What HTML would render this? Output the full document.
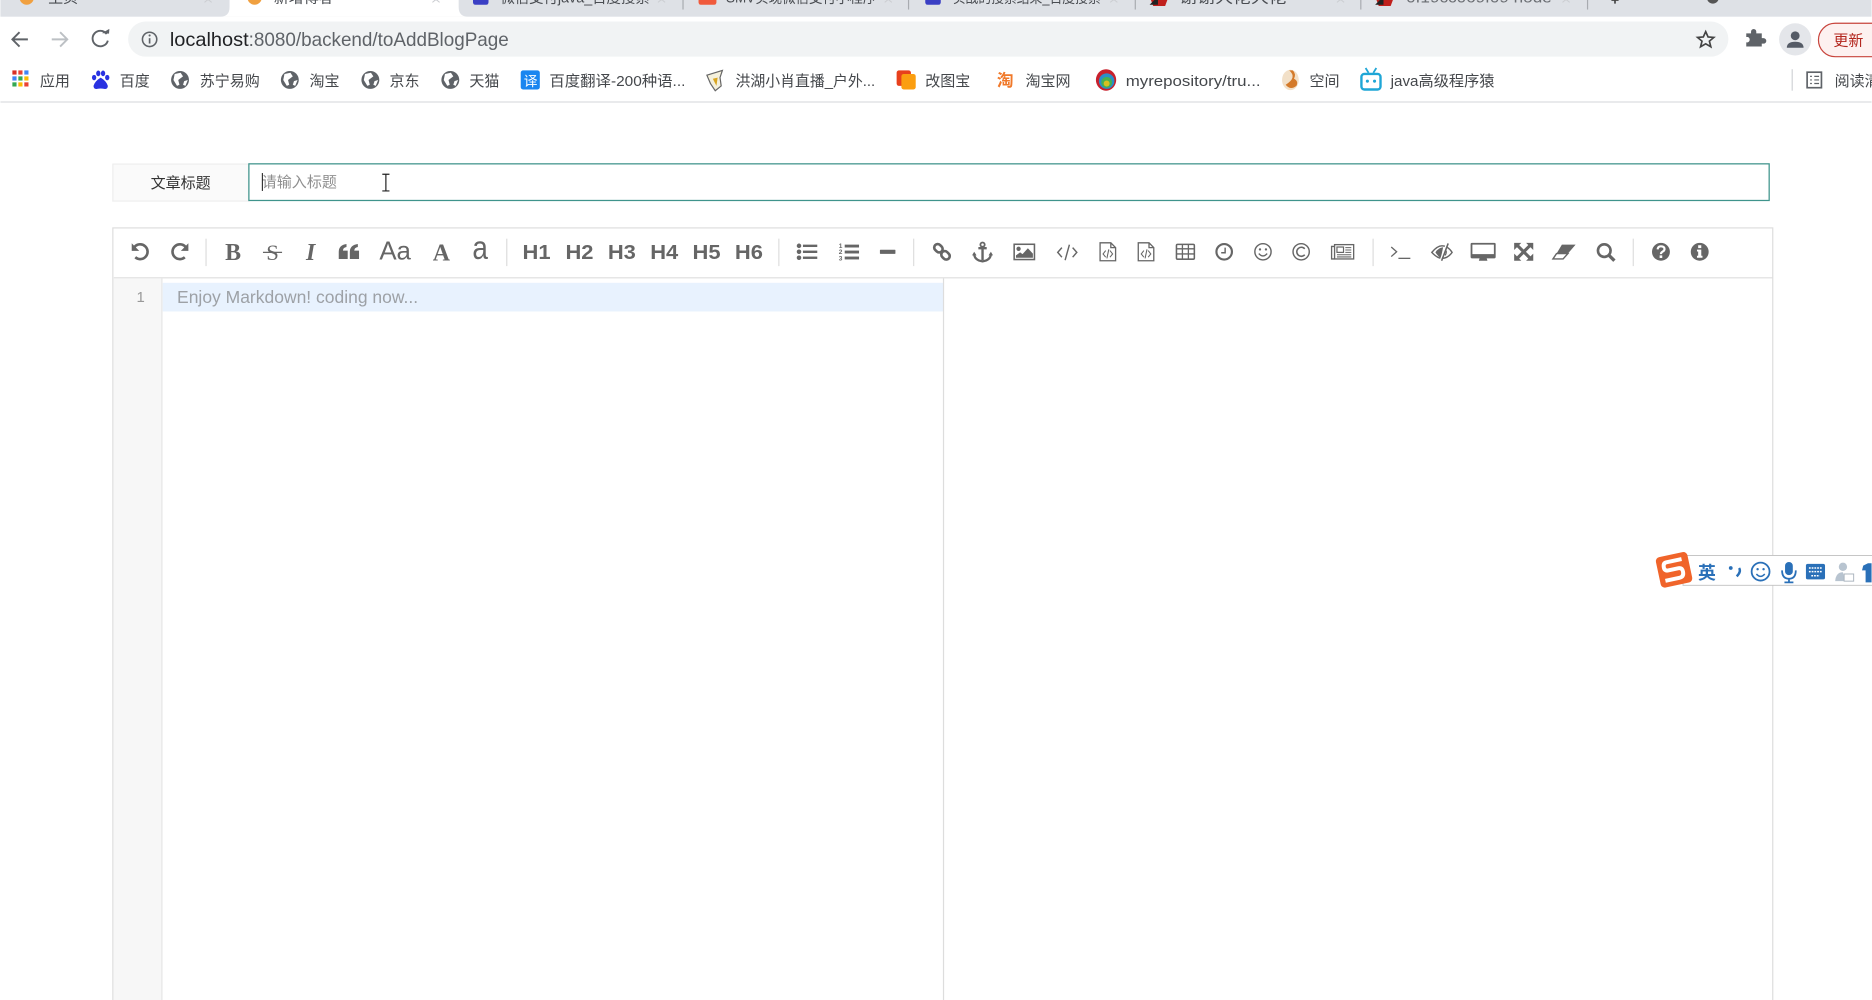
<!DOCTYPE html>
<html lang="zh-CN">
<head>
<meta charset="utf-8">
<title>localhost:8080/backend/toAddBlogPage</title>
<style>
html,body{margin:0;padding:0;width:1872px;height:1000px;overflow:hidden;background:#fff}
svg{display:block}
text{font-family:"Liberation Sans","Noto Sans CJK SC",sans-serif}
.bm{font-size:12.6px;fill:#44474b}
.tab{font-size:12.6px;fill:#4a4d52}
.h{font-family:"Liberation Sans",sans-serif;font-weight:700;font-size:17px;fill:#666}
.ic{fill:#666}
.st{fill:none;stroke:#666;stroke-width:1.3}
.st2{fill:none;stroke:#666;stroke-width:2.2}
.sep{stroke:#ddd;stroke-width:1}
.bl{fill:#2a70b8}
</style>
</head>
<body>
<svg width="1872" height="1000" viewBox="0 0 1568 838" xmlns="http://www.w3.org/2000/svg">
<rect width="1568" height="838" fill="#fff"/>

<!-- Tab strip -->
<rect width="1568" height="14" fill="#dee1e6"/>
<path d="M184 14 Q192 14 192 6 L192 0 L384 0 L384 6 Q384 14 392 14 Z" fill="#fff"/>
<circle cx="22" cy="-2" r="6" fill="#f0a040"/>
<circle cx="213" cy="-2" r="6" fill="#f0a040"/>
<text class="tab" x="40" y="2">主页</text>
<text class="tab" x="229" y="2">新增博客</text>
<rect x="396" y="-6" width="13" height="10" rx="2" fill="#3a3fc4"/>
<text class="tab" x="419" y="2" textLength="125" lengthAdjust="spacingAndGlyphs">微信支付java_百度搜索</text>
<rect x="585" y="-6" width="15" height="10" rx="2" fill="#f05a3c"/>
<text class="tab" x="608" y="2" textLength="126" lengthAdjust="spacingAndGlyphs">SMV实现微信支付小程序</text>
<rect x="775" y="-6" width="13" height="10" rx="2" fill="#3a3fc4"/>
<text class="tab" x="798" y="2" textLength="124" lengthAdjust="spacingAndGlyphs">实战的搜索结果_百度搜索</text>
<path d="M963 -3 L979 -3 L976 5 L966 5 Z" fill="#c0201c"/><path d="M963 4 L970 -3 L970 4 Z" fill="#222"/>
<text class="tab" x="988" y="2" textLength="90" lengthAdjust="spacingAndGlyphs">谢谢大佬大佬</text>
<path d="M1152 -3 L1168 -3 L1165 5 L1155 5 Z" fill="#c0201c"/><path d="M1152 4 L1159 -3 L1159 4 Z" fill="#222"/>
<text class="tab" x="1178" y="2" textLength="122" lengthAdjust="spacingAndGlyphs" style="fill:#6a6d72">0f19cc069f09 node</text>
<g stroke="#a8abb0" stroke-width="1">
<line x1="572" y1="0" x2="572" y2="8"/><line x1="761" y1="0" x2="761" y2="8"/><line x1="951" y1="0" x2="951" y2="8"/><line x1="1140" y1="0" x2="1140" y2="8"/><line x1="1330" y1="0" x2="1330" y2="8"/>
</g>
<g stroke="#ccced2" stroke-width="0.900" fill="none">
<path d="M171 -3 L177 2 M177 -3 L171 2"/><path d="M362 -3 L368 2 M368 -3 L362 2"/><path d="M551 -3 L557 2 M557 -3 L551 2"/><path d="M741 -3 L747 2 M747 -3 L741 2"/><path d="M930 -3 L936 2 M936 -3 L930 2"/><path d="M1120 -3 L1126 2 M1126 -3 L1120 2"/><path d="M1309 -3 L1315 2 M1315 -3 L1309 2"/>
</g>
<path d="M1353 -3 V3 M1350 0 H1356" stroke="#444" stroke-width="1.400"/>
<circle cx="1435" cy="-2" r="5" fill="#555"/>

<!-- Nav -->
<g fill="none" stroke="#5f6368" stroke-width="1.600">
<path d="M23 33 H10 M16 27 L10 33 L16 39"/>
</g>
<g fill="none" stroke="#bcc0c4" stroke-width="1.600">
<path d="M43 33 H56 M50 27 L56 33 L50 39"/>
</g>
<g fill="none" stroke="#5f6368" stroke-width="1.600">
<path d="M89 28.500 A6.500 6.500 0 1 0 90 34"/>
</g>
<path d="M85 28 L91 28 L91 24 Z" fill="#5f6368" transform="rotate(4 88 28)"/>

<!-- Address bar -->
<rect x="107" y="18" width="1341" height="29.500" rx="14.700" fill="#f1f3f4"/>
<circle cx="125" cy="33" r="6" fill="none" stroke="#5f6368" stroke-width="1.300"/>
<path d="M125 32 V36.500" stroke="#5f6368" stroke-width="1.400"/><circle cx="125" cy="29.700" r="0.900" fill="#5f6368"/>
<text x="142" y="38.500" font-size="16.300" fill="#202124" textLength="66" lengthAdjust="spacingAndGlyphs">localhost</text>
<text x="208" y="38.500" font-size="16.300" fill="#5f6368" textLength="218" lengthAdjust="spacingAndGlyphs">:8080/backend/toAddBlogPage</text>
<path d="M1429 26.500 L1431 31 L1435.800 31.400 L1432.100 34.500 L1433.300 39.200 L1429 36.700 L1424.700 39.200 L1425.900 34.500 L1422.200 31.400 L1427 31 Z" fill="none" stroke="#444" stroke-width="1.400"/>
<!-- puzzle -->
<path d="M1463 29 H1467 V27.500 A2.200 2.200 0 0 1 1471.400 27.500 V29 H1476 V33 H1477.500 A2.300 2.300 0 0 1 1477.500 37.600 H1476 V40 H1463 V36.500 H1464.300 A2.400 2.400 0 0 0 1464.300 32 H1463 Z" fill="#5f6368" transform="translate(0 -1)"/>
<!-- avatar -->
<circle cx="1504" cy="33" r="13.500" fill="#e4e6ea"/>
<circle cx="1504" cy="30" r="3.700" fill="#555b66"/>
<path d="M1497 40 Q1497 35 1504 35 Q1511 35 1511 40 Z" fill="#555b66"/>
<!-- update -->
<rect x="1523.500" y="19.500" width="80" height="28" rx="14" fill="#fdf1f0" stroke="#c8443c" stroke-width="1"/>
<text x="1536" y="38" font-size="12.600" fill="#b3261e">更新</text>

<!-- Bookmark bar -->
<g>
<rect x="10" y="59" width="3.500" height="3.500" fill="#d93025"/><rect x="15" y="59" width="3.500" height="3.500" fill="#ea4335"/><rect x="20" y="59" width="3.500" height="3.500" fill="#4285f4"/>
<rect x="10" y="64" width="3.500" height="3.500" fill="#4285f4"/><rect x="15" y="64" width="3.500" height="3.500" fill="#34a853"/><rect x="20" y="64" width="3.500" height="3.500" fill="#fbbc04"/>
<rect x="10" y="69" width="3.500" height="3.500" fill="#34a853"/><rect x="15" y="69" width="3.500" height="3.500" fill="#fbbc04"/><rect x="20" y="69" width="3.500" height="3.500" fill="#ea4335"/>
</g>
<text class="bm" x="33" y="72">应用</text>
<!-- baidu paw -->
<g fill="#2932e1">
<ellipse cx="78.500" cy="65" rx="1.800" ry="2.300"/><ellipse cx="82" cy="61.500" rx="1.800" ry="2.400"/><ellipse cx="86" cy="61.500" rx="1.800" ry="2.400"/><ellipse cx="89.500" cy="65" rx="1.800" ry="2.300"/>
<path d="M84 65 Q79 68 78 72 Q78 75 81 74.500 Q84 73.800 87 74.500 Q90 75 90 72 Q89 68 84 65Z"/>
</g>
<text class="bm" x="100" y="72">百度</text>
<!-- globes -->
<g><circle cx="150.500" cy="67" r="7.500" fill="#5f6368"/><path d="M146 62 L151 61 L153 64 L149 67 L150 71 L148 72 L145 67 Z M154 68 L157 67 L155 72 L153 71 Z" fill="#fff"/></g>
<text class="bm" x="167" y="72">苏宁易购</text>
<g><circle cx="242.500" cy="67" r="7.500" fill="#5f6368"/><path d="M238 62 L243 61 L245 64 L241 67 L242 71 L240 72 L237 67 Z M246 68 L249 67 L247 72 L245 71 Z" fill="#fff"/></g>
<text class="bm" x="259" y="72">淘宝</text>
<g><circle cx="310" cy="67" r="7.500" fill="#5f6368"/><path d="M305.500 62 L310.500 61 L312.500 64 L308.500 67 L309.500 71 L307.500 72 L304.500 67 Z M313.500 68 L316.500 67 L314.500 72 L312.500 71 Z" fill="#fff"/></g>
<text class="bm" x="326" y="72">京东</text>
<g><circle cx="377" cy="67" r="7.500" fill="#5f6368"/><path d="M372.500 62 L377.500 61 L379.500 64 L375.500 67 L376.500 71 L374.500 72 L371.500 67 Z M380.500 68 L383.500 67 L381.500 72 L379.500 71 Z" fill="#fff"/></g>
<text class="bm" x="393" y="72">天猫</text>
<!-- translate -->
<rect x="436" y="59" width="16" height="16" rx="2" fill="#1a86f0"/>
<text x="438.500" y="72" font-size="11.500" fill="#fff">译</text>
<text class="bm" x="460" y="72" textLength="114" lengthAdjust="spacingAndGlyphs">百度翻译-200种语...</text>
<!-- mascot -->
<path d="M592 63 L605 59 L603 65 L604 72 L599 76 L595 70 Z" fill="#f4f0dc" stroke="#666" stroke-width="1"/>
<path d="M597 66 L601 65 L600 72 Z" fill="#d9a520"/>
<text class="bm" x="616" y="72" textLength="117" lengthAdjust="spacingAndGlyphs">洪湖小肖直播_户外...</text>
<!-- gaitubao -->
<rect x="751" y="59" width="12" height="13" rx="2" fill="#e8401c"/>
<rect x="755" y="62" width="12" height="13" rx="2" fill="#fb9e10"/>
<text class="bm" x="775" y="72">改图宝</text>
<!-- taobao -->
<text x="835" y="72" font-size="14" font-weight="700" fill="#f0792a">淘</text>
<text class="bm" x="859" y="72">淘宝网</text>
<!-- colored logo -->
<ellipse cx="926.500" cy="67" rx="8.500" ry="9" fill="#c8202c"/>
<ellipse cx="927" cy="68" rx="6.500" ry="6.500" fill="#2a8fc8"/>
<ellipse cx="927" cy="69" rx="4.500" ry="4.500" fill="#48b050"/>
<ellipse cx="927" cy="70" rx="2.500" ry="2.500" fill="#d8c020"/>
<text class="bm" x="943" y="72" textLength="113" lengthAdjust="spacingAndGlyphs">myrepository/tru...</text>
<!-- kongjian -->
<ellipse cx="1081" cy="67" rx="7" ry="8.500" fill="#f2e0c8"/>
<path d="M1080 59 Q1087 65 1077 71 Q1081 76 1086 72 Q1088 68 1084 66 Q1086 62 1083 59Z" fill="#d47a2a"/>
<text class="bm" x="1097" y="72">空间</text>
<!-- bilibili -->
<rect x="1140.500" y="62" width="16" height="13" rx="2.500" fill="none" stroke="#1fa6d6" stroke-width="2"/>
<path d="M1144 57 L1146.500 61 M1153 57 L1150.500 61" stroke="#1fa6d6" stroke-width="1.500"/>
<circle cx="1145.500" cy="68" r="1.300" fill="#1fa6d6"/><circle cx="1151.500" cy="68" r="1.300" fill="#1fa6d6"/>
<text class="bm" x="1165" y="72" textLength="87" lengthAdjust="spacingAndGlyphs">java高级程序猿</text>
<line x1="1501.500" y1="58" x2="1501.500" y2="76" stroke="#d0d2d6"/>
<rect x="1514" y="60.500" width="12" height="13" fill="none" stroke="#5f6368" stroke-width="1.400"/>
<path d="M1516.500 64 H1518 M1516.500 67 H1518 M1516.500 70 H1518 M1520 64 H1524 M1520 67 H1524 M1520 70 H1524" stroke="#5f6368" stroke-width="1"/>
<text class="bm" x="1537" y="72">阅读清单</text>
<line x1="0" y1="85.500" x2="1568" y2="85.500" stroke="#dcdee1" stroke-width="1"/>

<!-- Title row -->
<rect x="94.200" y="137.500" width="114" height="31" fill="#fafafa" stroke="#eee"/>
<text x="151" y="157.500" font-size="12.600" fill="#333" text-anchor="middle">文章标题</text>
<rect x="208.200" y="137.300" width="1274" height="30.700" fill="#fff" stroke="#3f948c" stroke-width="1.050"/>
<text x="219" y="156.500" font-size="12.600" fill="#8f8f8f">请输入标题</text>
<line x1="219.500" y1="145" x2="219.500" y2="160" stroke="#222" stroke-width="0.900"/>
<path d="M320 146 H326 M323 146 V160 M320 160 H326" stroke="#222" stroke-width="1" fill="none"/>

<!-- Editor frame -->
<rect x="94.200" y="191" width="1391" height="660" fill="#fff" stroke="#ddd" stroke-width="1"/>
<line x1="95" y1="232.800" x2="1485" y2="232.800" stroke="#ddd"/>
<rect x="94.700" y="233.300" width="40.500" height="610" fill="#f7f7f7"/>
<line x1="135.300" y1="233.300" x2="135.300" y2="838" stroke="#e6e6e6"/>
<rect x="136" y="237" width="654" height="24" fill="#e8f2fe"/>
<line x1="790.300" y1="233.300" x2="790.300" y2="838" stroke="#ddd"/>
<text x="117.500" y="253" font-size="12.500" fill="#999" text-anchor="middle">1</text>
<text x="148" y="254" font-size="14.500" fill="#9da1a6" textLength="202" lengthAdjust="spacingAndGlyphs">Enjoy Markdown! coding now...</text>

<!-- Separators -->
<g class="sep">
<line x1="172.300" y1="200" x2="172.300" y2="223"/><line x1="424.300" y1="200" x2="424.300" y2="223"/><line x1="652.300" y1="200" x2="652.300" y2="223"/><line x1="765.300" y1="200" x2="765.300" y2="223"/><line x1="1150.300" y1="200" x2="1150.300" y2="223"/><line x1="1368.300" y1="200" x2="1368.300" y2="223"/>
</g>

<!-- undo / redo -->
<g transform="translate(117.500 211)"><path d="M-5 -4.200 A6.200 6.200 0 1 1 -4.500 4.600" class="st2"/><path d="M-7.500 -7.200 V-0.800 H-1.200 Z" class="ic"/></g>
<g transform="translate(150 211)"><path d="M5 -4.200 A6.200 6.200 0 1 0 4.500 4.600" class="st2"/><path d="M7.500 -7.200 V-0.800 H1.200 Z" class="ic"/></g>

<!-- B S I quote Aa A a -->
<text x="195" y="218" font-size="20" font-weight="700" fill="#666" text-anchor="middle" style="font-family:'Liberation Serif',serif">B</text>
<text x="228" y="218" font-size="19" fill="#666" text-anchor="middle" style="font-family:'Liberation Serif',serif">S</text>
<line x1="220" y1="211.500" x2="236" y2="211.500" stroke="#666" stroke-width="1.100"/>
<text x="260" y="218" font-size="20" font-style="italic" font-weight="700" fill="#666" text-anchor="middle" style="font-family:'Liberation Serif',serif">I</text>
<g transform="translate(292 211)" fill="#666">
<path d="M-8.500 6 V0 Q-8.500 -5.500 -2 -6.500 V-4 Q-5 -3.500 -5 -1 H-1 V6 Z"/>
<path d="M0.800 6 V0 Q0.800 -5.500 7.500 -6.500 V-4 Q4.500 -3.500 4.500 -1 H8.500 V6 Z"/>
</g>
<text x="317.500" y="217.500" font-size="22" fill="#666" textLength="26.500" lengthAdjust="spacingAndGlyphs">Aa</text>
<text x="369.500" y="218.500" font-size="20" font-weight="700" fill="#666" text-anchor="middle" style="font-family:'Liberation Serif',serif">A</text>
<text x="395.500" y="217" font-size="28" fill="#666" textLength="13" lengthAdjust="spacingAndGlyphs">a</text>

<!-- H1..H6 -->
<text class="h" x="437.500" y="217" textLength="23.500" lengthAdjust="spacingAndGlyphs">H1</text>
<text class="h" x="473.500" y="217" textLength="23.500" lengthAdjust="spacingAndGlyphs">H2</text>
<text class="h" x="509" y="217" textLength="23.500" lengthAdjust="spacingAndGlyphs">H3</text>
<text class="h" x="544.500" y="217" textLength="23.500" lengthAdjust="spacingAndGlyphs">H4</text>
<text class="h" x="580" y="217" textLength="23.500" lengthAdjust="spacingAndGlyphs">H5</text>
<text class="h" x="615.500" y="217" textLength="23.500" lengthAdjust="spacingAndGlyphs">H6</text>

<!-- ul -->
<g transform="translate(676 211)" fill="#666">
<circle cx="-6.800" cy="-5" r="1.900"/><circle cx="-6.800" cy="0" r="1.900"/><circle cx="-6.800" cy="5" r="1.900"/>
<rect x="-3.500" y="-6" width="12" height="2"/><rect x="-3.500" y="-1" width="12" height="2"/><rect x="-3.500" y="4" width="12" height="2"/>
</g>
<!-- ol -->
<g transform="translate(711 211)" fill="#666">
<text x="-8.500" y="-3.300" font-size="5.500" font-weight="700" fill="#666">1</text>
<text x="-8.500" y="2" font-size="5.500" font-weight="700" fill="#666">2</text>
<text x="-8.500" y="7.500" font-size="5.500" font-weight="700" fill="#666">3</text>
<rect x="-3.500" y="-6" width="12" height="2.400"/><rect x="-3.500" y="-1" width="12" height="2.400"/><rect x="-3.500" y="4" width="12" height="2.400"/>
</g>
<!-- hr -->
<rect x="737" y="209.300" width="13" height="3.400" rx="0.500" fill="#666"/>
<!-- link -->
<g transform="translate(789 211) rotate(45)" fill="none" stroke="#666" stroke-width="2.200">
<rect x="-8" y="-2.900" width="7.600" height="5.800" rx="2.900"/>
<rect x="0.400" y="-2.900" width="7.600" height="5.800" rx="2.900"/>
</g>
<!-- anchor -->
<g transform="translate(823 211)" fill="none" stroke="#666">
<circle cx="0" cy="-6" r="1.800" stroke-width="1.500"/>
<path d="M-3.500 -3 H3.500 M0 -4 V7" stroke-width="2"/>
<path d="M-7 1.500 Q-7 7 0 8 Q7 7 7 1.500" stroke-width="1.900"/>
<path d="M-8.800 3 L-7 0 L-5 3 Z M8.800 3 L7 0 L5 3 Z" fill="#666" stroke="none"/>
</g>
<!-- image -->
<g transform="translate(858 211)">
<rect x="-8.500" y="-6.300" width="17" height="12.800" fill="none" stroke="#666" stroke-width="1.300"/>
<circle cx="-4.800" cy="-2.500" r="1.800" fill="#666"/>
<path d="M-7 5 V3 L-3.500 0.500 L-1.500 2 L3 -3 L7.200 1.500 V5 Z" fill="#666"/>
</g>
<!-- code -->
<g transform="translate(894 211)" fill="none" stroke="#666" stroke-width="1.200">
<path d="M-4.500 -3.500 L-8 0.500 L-4.500 4.500 M4.500 -3.500 L8 0.500 L4.500 4.500 M1.800 -6 L-1.800 7"/>
</g>
<!-- files -->
<g transform="translate(928 211)" fill="none" stroke="#666" stroke-width="1.100">
<path d="M-6.500 -7.500 H2.500 L6.500 -3.500 V7.500 H-6.500 Z M2.500 -7.500 V-3.500 H6.500"/>
<path d="M-1.800 -1 L-4 1.800 L-1.800 4.500 M1.800 -1 L4 1.800 L1.800 4.500 M0.800 -2 L-0.800 5.500" stroke-width="0.900"/>
</g>
<g transform="translate(960 211)" fill="none" stroke="#666" stroke-width="1.100">
<path d="M-6.500 -7.500 H2.500 L6.500 -3.500 V7.500 H-6.500 Z M2.500 -7.500 V-3.500 H6.500"/>
<path d="M-1.800 -1 L-4 1.800 L-1.800 4.500 M1.800 -1 L4 1.800 L1.800 4.500 M0.800 -2 L-0.800 5.500" stroke-width="0.900"/>
</g>
<!-- table -->
<g transform="translate(993 211)">
<rect x="-7.500" y="-6.200" width="15" height="12.400" rx="1" fill="none" stroke="#666" stroke-width="1.300"/>
<path d="M-7.500 -2.500 H7.500 M-7.500 1.800 H7.500 M-2.500 -6 V6 M2.500 -6 V6" stroke="#666" stroke-width="1.100"/>
</g>
<!-- clock -->
<g transform="translate(1025.500 211)" fill="none" stroke="#666">
<circle r="6.500" stroke-width="1.800"/>
<path d="M0.800 -3.500 V0.800 H-2.500" stroke-width="1.200"/>
</g>
<!-- smile -->
<g transform="translate(1058 211)" fill="none" stroke="#666">
<circle r="6.800" stroke-width="1.200"/>
<path d="M-3.500 1.500 Q0 5.500 3.500 1.500" stroke-width="1.200"/>
<circle cx="-2.500" cy="-2" r="1" fill="#666" stroke="none"/><circle cx="2.500" cy="-2" r="1" fill="#666" stroke="none"/>
</g>
<!-- copyright -->
<g transform="translate(1090 211)" fill="none" stroke="#666">
<circle r="6.800" stroke-width="1.200"/>
<path d="M3 -2.500 A3.800 3.800 0 1 0 3 2.500" stroke-width="1.300"/>
</g>
<!-- newspaper -->
<g transform="translate(1125 211)" fill="none" stroke="#666" stroke-width="1.100">
<rect x="-7" y="-6" width="16" height="12"/>
<path d="M-7 -4.500 H-9.500 V6 H-7"/>
<rect x="-5" y="-4" width="5.500" height="4.500" stroke-width="1"/>
<path d="M2 -3.500 H7 M2 -1.500 H7 M2 0.500 H7 M-5 2.500 H7 M-5 4.300 H7" stroke-width="0.900"/>
</g>
<!-- terminal -->
<g transform="translate(1173 211)" fill="none" stroke="#666" stroke-width="1.100">
<path d="M-7.500 -4 L-3 0 L-7.500 4"/><path d="M-1.500 5.500 H8.500"/>
</g>
<!-- eye-slash -->
<g transform="translate(1208 211)" fill="none" stroke="#666">
<path d="M-8.500 0.500 Q-4 -5 0 -5 Q5 -5 8.500 0.500 Q5 5.500 0 5.500 Q-4 5.500 -8.500 0.500 Z" stroke-width="1.200"/>
<path d="M-5.500 0.500 Q-3 -3.500 1 -3.800 L-1 5.500 Q-3.500 3.500 -5.500 0.500 Z" fill="#666" stroke="none"/>
<path d="M4 -7 L-1.500 7.500" stroke="#fff" stroke-width="1.200"/>
<path d="M5.200 -7 L-0.300 7.500" stroke="#666" stroke-width="1.300"/>
<path d="M2.500 3 Q4 1.500 3.500 -1" stroke-width="1"/>
</g>
<!-- desktop -->
<g transform="translate(1242.500 211)" fill="#666">
<path d="M-9.500 -7.500 H9.500 Q10.500 -7.500 10.500 -6.500 V4.500 Q10.500 5.500 9.500 5.500 H3 L3.600 7.500 H-3.600 L-3 5.500 H-9.500 Q-10.500 5.500 -10.500 4.500 V-6.500 Q-10.500 -7.500 -9.500 -7.500 Z M-9 -6 V2 H9 V-6 Z" fill-rule="evenodd"/>
</g>
<!-- expand -->
<g transform="translate(1276.500 211)" fill="#666">
<path d="M-8 -7.500 H-2 L-8 -1.500 Z M8 -7.500 H2 L8 -1.500 Z M-8 7.500 H-2 L-8 1.500 Z M8 7.500 H2 L8 1.500 Z"/>
<path d="M-5 -5 L5 5 M5 -5 L-5 5" stroke="#666" stroke-width="2.600"/>
</g>
<!-- eraser -->
<g transform="translate(1310.500 211)">
<path d="M-2 -6 H9.500 L3 1.500 H-6.500 Z" fill="#666"/>
<path d="M-6.500 1.500 H3 L-1 6 H-9.500 Z" fill="#fff" stroke="#666" stroke-width="1.200"/>
</g>
<!-- search -->
<g transform="translate(1345 211)" fill="none" stroke="#666">
<circle cx="-1" cy="-1" r="5.300" stroke-width="2.200"/>
<path d="M3 3 L7.500 7.500" stroke-width="2.800"/>
</g>
<!-- help -->
<g transform="translate(1391.500 211)">
<circle r="7.500" fill="#666"/>
<path d="M-2.800 -2 Q-2.500 -4.600 0 -4.600 Q3 -4.600 3 -2.200 Q3 -0.800 1.200 0 Q0 0.600 0 2" fill="none" stroke="#fff" stroke-width="1.800"/>
<rect x="-1.100" y="3" width="2.200" height="2.200" fill="#fff"/>
</g>
<!-- info -->
<g transform="translate(1424 211)">
<circle r="7.500" fill="#666"/>
<rect x="-1.300" y="-5.500" width="2.600" height="2.400" fill="#fff"/>
<path d="M-2.300 -1.800 H1.300 V3.300 H2.300 V5 H-2.300 V3.300 H-1.300 V-0.200 H-2.300 Z" fill="#fff"/>
</g>

<!-- Sogou bar -->
<rect x="1410" y="465.500" width="160" height="25" fill="#fff" stroke="#c4c4c4" stroke-width="0.800"/>
<g transform="translate(1402.500 477.500) rotate(-12)">
<rect x="-13.500" y="-13" width="27" height="26" rx="3.500" fill="#f0642a"/>
<path d="M8 -7.500 H-5 Q-8 -7.500 -8 -3.500 Q-8 -0.500 -5 -0.500 H4 Q7 -0.500 7 3 Q7 7.500 3 7.500 H-9" fill="none" stroke="#fff" stroke-width="3.300"/>
</g>
<text x="1430" y="485" font-size="15" font-weight="700" text-anchor="middle" style="fill:#2a70b8">英</text>
<circle cx="1450" cy="476" r="1.600" class="bl"/>
<path d="M1457 476 Q1459 479 1455 483" fill="none" stroke="#2a70b8" stroke-width="2"/>
<circle cx="1475" cy="479" r="7.500" fill="none" stroke="#2a70b8" stroke-width="1.500"/>
<circle cx="1472.500" cy="477" r="1" class="bl"/><circle cx="1477.500" cy="477" r="1" class="bl"/>
<path d="M1471.500 481 Q1475 485 1478.500 481" fill="none" stroke="#2a70b8" stroke-width="1.300"/>
<rect x="1495.500" y="471" width="6.500" height="11" rx="3.200" class="bl"/>
<path d="M1493 478 Q1493 485 1498.800 485 Q1504.500 485 1504.500 478 M1498.800 485 V488 M1495 488 H1502.500" fill="none" stroke="#2a70b8" stroke-width="1.500"/>
<rect x="1513" y="472.500" width="16" height="13" rx="1.500" class="bl"/>
<path d="M1515.500 476 H1526.500 M1515.500 479 H1526.500 M1517.500 482.500 H1524.500" stroke="#fff" stroke-width="1.300" stroke-dasharray="1.500 0.800"/>
<circle cx="1544" cy="475" r="3.500" fill="#b8c4d0"/>
<path d="M1537.500 487 Q1538 479.500 1544 479.500 L1546 487 Z" fill="#b8c4d0"/>
<rect x="1545" y="481" width="8" height="6" fill="#fff" stroke="#aab4be" stroke-width="0.800"/>
<path d="M1561 474 L1565 472 H1568 V488 H1563 V478 L1560 478 Z" class="bl"/>
</svg>
</body>
</html>
